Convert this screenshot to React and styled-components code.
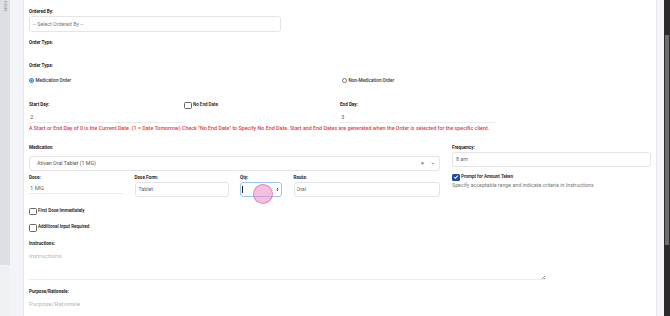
import React from 'react'
import styled, { createGlobalStyle } from 'styled-components'

const Global = createGlobalStyle`
  html, body { margin: 0; padding: 0; background: #fff; }
  body { font-family: Roboto, "Liberation Sans", sans-serif; overflow: hidden; }
  * { box-sizing: border-box; }
`

export default function App() {
  return <Page>
    <Global />
    <Sidebar>
      <SideTop><SideTab>HOME</SideTab></SideTop>
      <SideBottom />
    </Sidebar>
    <Gutter />

    <Card>
      <Label>Ordered By:</Label>
      <SelectBox $w="252px" $pad="3px" $h="16px">-- Select Ordered By --</SelectBox>

      <Label $mt="8px">Order Type:</Label>
      <Empty />
      <Label>Order Type:</Label>

      <RadioRow>
        <Option><Radio $on /> Medication Order</Option>
        <Option $shift="2px"><Radio /> Non-Medication Order</Option>
      </RadioRow>

      <DayRow>
        <div>
          <Label>Start Day:</Label>
          <LineInput readOnly defaultValue="2" />
        </div>
        <CheckLine>
          <Box />
          <BoxText>No End Date</BoxText>
        </CheckLine>
        <div>
          <Label>End Day:</Label>
          <LineInput readOnly defaultValue="3" />
        </div>
      </DayRow>

      <Warning>
        A Start or End Day of 0 is the Current Date. (1 = Date Tomorrow) Check "No End Date" to Specify No End Date. Start and End Dates are generated when the Order is selected for the specific client.
      </Warning>

      <MedRow>
        <div>
          <Label>Medication:</Label>
          <SelectBox $mt="5px" $pad="7px" $h="15px" $dark>
            <span>Ativan Oral Tablet (1 MG)</span>
            <SelectIcons><span>×</span><Chevron viewBox="0 0 6 4"><path d="M1 1 L3 3 L5 1" /></Chevron></SelectIcons>
          </SelectBox>

          <DoseRow>
            <div>
              <Label>Dose:</Label>
              <LineInput readOnly defaultValue="1 MG" $h="13px" $pt="2px" />
            </div>
            <div>
              <Label>Dose Form:</Label>
              <BoxInput readOnly defaultValue="Tablet" />
            </div>
            <QtyField>
              <Label>Qty:</Label>
              <QtyBox>
                <Caret />
                <Spinner>
                  <svg viewBox="0 0 4 7" width="3" height="5"><path d="M0.5 3 L2 1 L3.5 3 Z M0.5 4 L2 6 L3.5 4 Z" fill="#444" /></svg>
                </Spinner>
              </QtyBox>
              <Touch />
            </QtyField>
            <div>
              <Label>Route:</Label>
              <BoxInput readOnly defaultValue="Oral" $pl="2px" />
            </div>
          </DoseRow>
        </div>

        <div>
          <Label>Frequency:</Label>
          <BoxInput readOnly defaultValue="8 am" $mt="1px" $h="15px" />
          <CheckLine $mt="7px">
            <Box $on>
              <svg viewBox="0 0 8 8" width="6" height="6"><path d="M1.5 4.2 L3.2 5.8 L6.5 2.2" stroke="#fff" strokeWidth="1.4" fill="none" /></svg>
            </Box>
            <BoxText>Prompt for Amount Taken</BoxText>
          </CheckLine>
          <Helper>Specify acceptable range and indicate criteria in Instructions</Helper>
        </div>
      </MedRow>

      <CheckLine $mt="11px">
        <Box />
        <BoxText>First Dose Immediately</BoxText>
      </CheckLine>
      <CheckLine $mt="9px">
        <Box />
        <BoxText>Additional Input Required</BoxText>
      </CheckLine>

      <Label $mt="9px">Instructions:</Label>
      <AreaWrap>
        <Area placeholder="Instructions" readOnly />
      </AreaWrap>

      <Label $mt="9px">Purpose/Rationale:</Label>
      <Area placeholder="Purpose/Rationale" readOnly $bare />
    </Card>

    <RightGutter />
    <ScrollTrack><ScrollThumb /></ScrollTrack>
  </Page>
}

const Page = styled.div`
  display: flex;
  width: 670px;
  height: 316px;
  overflow: hidden;
`

const Sidebar = styled.div`
  width: 10px;
  display: flex;
  flex-direction: column;
`

const SideTop = styled.div`
  height: 265px;
  background: #dcdfe6;
  display: flex;
  justify-content: center;
`

const SideBottom = styled.div`
  flex: 1;
  background: #eef0f4;
`

const SideTab = styled.div`
  writing-mode: vertical-rl;
  font-size: 3.5px;
  letter-spacing: 0.2px;
  color: #8b8e98;
  padding-top: 1px;
  height: 13px;
`

const Gutter = styled.div`
  width: 13px;
  background: #f3f4f8;
`

const Card = styled.div`
  flex: 1;
  background: #fff;
  border-left: 1px solid #e6e7ec;
  padding: 9px 5px 0 5px;
  display: flex;
  flex-direction: column;
  align-items: flex-start;
`

const Label = styled.div`
  font-size: 4.6px;
  line-height: 6px;
  font-weight: 700;
  color: #1e1e1e;
  margin-top: ${p => p.$mt || '0'};
  white-space: nowrap;
`

const SelectBox = styled.div`
  width: ${p => p.$w || '100%'};
  height: ${p => p.$h};
  margin-top: ${p => p.$mt || '0.5px'};
  border: 1px solid #e4e4e4;
  border-radius: 3px;
  padding-left: ${p => p.$pad};
  padding-right: 4px;
  display: flex;
  align-items: center;
  justify-content: space-between;
  font-size: 5.3px;
  color: ${p => (p.$dark ? '#555' : '#777')};
`

const SelectIcons = styled.div`
  display: flex;
  align-items: center;
  gap: 7px;
  color: #444;
  font-size: 5.5px;
`

const Chevron = styled.svg`
  width: 4px;
  height: 3px;
  path { stroke: #555; stroke-width: 0.9; fill: none; }
`

const Empty = styled.div`
  height: 17px;
`

const RadioRow = styled.div`
  width: 100%;
  display: grid;
  grid-template-columns: 311px 1fr;
  margin-top: 9px;
`

const Option = styled.div`
  display: flex;
  align-items: center;
  gap: 1.5px;
  font-size: 4.6px;
  line-height: 6px;
  font-weight: 500;
  color: #333;
  padding-left: ${p => p.$shift || '0'};
`

const Radio = styled.span`
  width: 5px;
  height: 5px;
  border-radius: 50%;
  border: ${p => (p.$on ? '1.3px solid #1a73e8' : '0.8px solid #777')};
  background: ${p => (p.$on ? 'radial-gradient(circle, #1a73e8 45%, #fff 50%)' : '#fff')};
`

const DayRow = styled.div`
  display: grid;
  grid-template-columns: 155px 156px 155px;
  margin-top: 18px;
`

const LineInput = styled.input`
  display: block;
  width: ${p => p.$w || '100%'};
  height: ${p => p.$h || '15px'};
  border: none;
  border-bottom: 1px solid #ececec;
  outline: none;
  padding: ${p => p.$pt || '3px'} 0 0 1px;
  font-family: inherit;
  font-size: 6px;
  color: #666;
  background: transparent;
`

const CheckLine = styled.div`
  display: flex;
  align-items: flex-start;
  gap: 1.5px;
  margin-top: ${p => p.$mt || '0'};
`

const Box = styled.span`
  width: 7.5px;
  height: 7.5px;
  flex: none;
  border-radius: 1.5px;
  border: ${p => (p.$on ? 'none' : '0.8px solid #666')};
  background: ${p => (p.$on ? '#1f4c97' : '#fff')};
  display: flex;
  align-items: center;
  justify-content: center;
`

const BoxText = styled.span`
  font-size: 4.5px;
  line-height: 6px;
  font-weight: 600;
  color: #222;
  white-space: nowrap;
`

const Warning = styled.div`
  margin-top: 2px;
  font-size: 5.35px;
  line-height: 7px;
  color: #e8393b;
  font-weight: 500;
  white-space: nowrap;
`

const MedRow = styled.div`
  width: 100%;
  display: grid;
  grid-template-columns: 411px 1fr;
  column-gap: 12px;
  margin-top: 13px;
`

const DoseRow = styled.div`
  display: grid;
  grid-template-columns: 94px 94px 42px 1fr;
  column-gap: 11.5px;
  margin-top: 4px;
`

const BoxInput = styled.input`
  display: block;
  width: 100%;
  height: ${p => p.$h || '14.5px'};
  margin-top: ${p => p.$mt || '1.5px'};
  border: 1px solid #e4e4e4;
  border-radius: 3px;
  outline: none;
  padding: 0 0 0 ${p => p.$pl || '3px'};
  font-family: inherit;
  font-size: 5.3px;
  color: #666;
  background: #fff;
`

const QtyField = styled.div`
  position: relative;
`

const QtyBox = styled.div`
  height: 14.5px;
  margin-top: 1.5px;
  border: 1px solid #9cc4f5;
  border-radius: 3px;
  display: flex;
  align-items: center;
  justify-content: space-between;
  padding: 0 2px 0 1px;
`

const Caret = styled.span`
  width: 0.7px;
  height: 7px;
  background: #222;
`

const Spinner = styled.span`
  display: flex;
  align-items: center;
`

const Touch = styled.span`
  position: absolute;
  left: 13px;
  top: 9px;
  width: 20px;
  height: 20px;
  border-radius: 50%;
  background: rgba(236, 130, 190, 0.5);
  border: 1px solid rgba(214, 90, 160, 0.6);
`

const Helper = styled.div`
  margin-top: 0.5px;
  font-size: 5.3px;
  line-height: 7px;
  color: #777;
  white-space: nowrap;
`

const AreaWrap = styled.div`
  position: relative;
  width: 516px;
  &::after {
    content: '';
    position: absolute;
    right: 0;
    bottom: 1px;
    width: 3px;
    height: 3px;
    background: linear-gradient(135deg, transparent 45%, #999 45%, #999 60%, transparent 60%, transparent 75%, #999 75%);
  }
`

const Area = styled.textarea`
  display: block;
  width: ${p => (p.$bare ? '516px' : '100%')};
  height: ${p => (p.$bare ? '20px' : '33px')};
  border: none;
  border-bottom: ${p => (p.$bare ? 'none' : '1px solid #ececec')};
  outline: none;
  resize: none;
  padding: 5px 0 0 0;
  font-family: inherit;
  font-size: 6.2px;
  line-height: 8px;
  color: #666;
  &::placeholder { color: #b8b8b8; }
`

const RightGutter = styled.div`
  width: 8px;
  background: #f5f6fc;
  border-left: 1px solid #e6e7ee;
`

const ScrollTrack = styled.div`
  width: 6px;
  background: #2b2b2b;
  padding: 35px 0 0 1px;
`

const ScrollThumb = styled.div`
  height: 210px;
  width: 4px;
  background: #6d6d6d;
`
